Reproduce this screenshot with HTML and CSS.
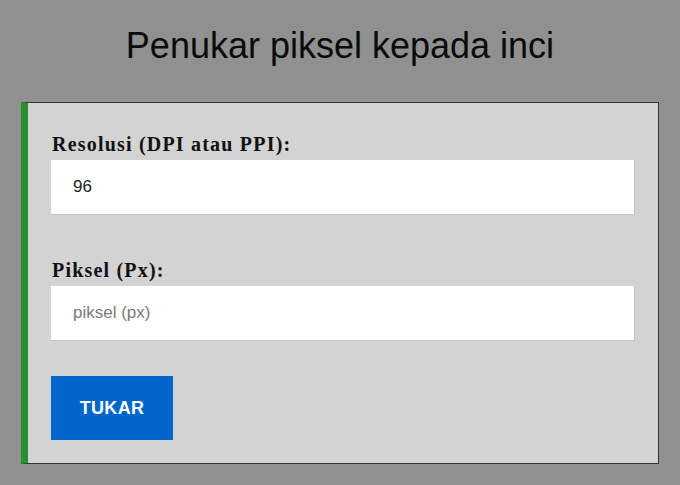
FILE: index.html
```html
<!DOCTYPE html>
<html>
<head>
<meta charset="utf-8">
<link rel="stylesheet" href="styles.css">
</head>
<body>
<h1 class="title">Penukar piksel kepada inci</h1>
<div class="card">
  <div class="field">
    <label class="label" for="dpi">Resolusi (DPI atau PPI):</label>
    <input class="input" id="dpi" type="text" value="96">
  </div>
  <div class="field field-second">
    <label class="label" for="px">Piksel (Px):</label>
    <input class="input" id="px" type="text" placeholder="piksel (px)">
  </div>
  <button class="btn" type="button">TUKAR</button>
</div>
</body>
</html>
```
FILE: styles.css
```css
html, body {
  margin: 0;
  padding: 0;
  background: #909090;
  height: 100%;
}
body {
  font-family: "Liberation Sans", Arial, sans-serif;
  padding-top: 24px;
  box-sizing: border-box;
}
.title {
  margin: 0;
  text-align: center;
  font-weight: normal;
  font-size: 36px;
  line-height: 44px;
  color: #0a0a0a;
}
.card {
  margin: 34px 21px 0 21px;
  background: #d3d3d3;
  border: 1px solid #333;
  border-left: 7px solid #2a8f33;
  padding: 29px 23px 23px 23px;
  height: 362px;
  box-sizing: border-box;
}
.field {
  display: flex;
  flex-direction: column;
}
.field-second {
  margin-top: 43px;
}
.label {
  font-family: "Liberation Serif", "Times New Roman", serif;
  font-weight: bold;
  font-size: 20px;
  letter-spacing: 1.2px;
  line-height: 24px;
  color: #111;
  margin-bottom: 4px;
  padding-left: 1px;
}
.input {
  height: 55px;
  box-sizing: border-box;
  border: none;
  border-right: 1px solid #c4c4c4;
  border-bottom: 1px solid #c4c4c4;
  background: #fff;
  padding: 0 22px;
  font-family: "Liberation Sans", Arial, sans-serif;
  font-size: 17px;
  color: #222;
  outline: none;
}
.input::placeholder {
  color: #7a7a7a;
}
.btn {
  margin-top: 35px;
  width: 122px;
  height: 64px;
  border: none;
  background: #0066cc;
  color: #fff;
  font-family: "Liberation Sans", Arial, sans-serif;
  font-weight: bold;
  font-size: 18px;
  letter-spacing: 0.3px;
  cursor: pointer;
}
```
